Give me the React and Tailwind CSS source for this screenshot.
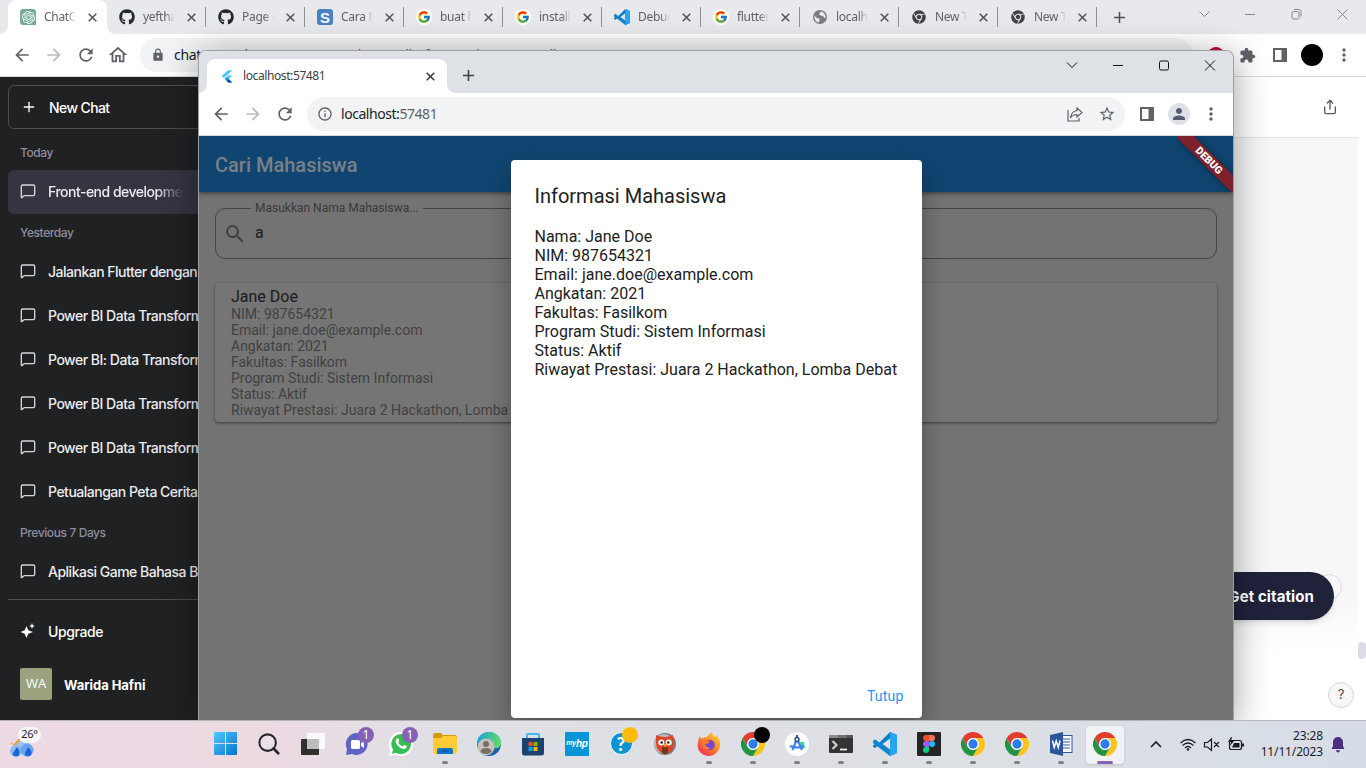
import React from "react";
import { FcGoogle } from "react-icons/fc";
import { FaGithub, FaChrome } from "react-icons/fa";
import { SiOpenai } from "react-icons/si";
import {
  MdArrowBack, MdArrowForward, MdRefresh, MdOutlineHome, MdLock, MdExtension, MdMoreVert,
  MdStarBorder, MdPerson, MdSearch, MdInfoOutline, MdAdd,
} from "react-icons/md";
import { MessageSquare, Plus, Share } from "lucide-react";

const S = "font-['Noto_Sans','Open_Sans',sans-serif]";

function VsCode({ size }) {
  return (
    <svg width={size} height={size} viewBox="0 0 24 24">
      <path d="M17 0 24 3v18l-7 3L6 13 2.200 16 0 15v-2l3-1-3-1V9l2.200-1L6 11Z" fill="#0a7fc8" />
      <path d="M17 6.500 9.500 12l7.500 5.500Z" fill="#e2e4ea" />
      <path d="m17 0 7 3v18l-7 3Z" fill="#27a5f0" />
      <path d="M0 9 2.200 7.500 17 18v6L0 11Z" fill="#1186cf" />
    </svg>
  );
}

function Chrome({ size = 24 }) {
  return (
    <svg width={size} height={size} viewBox="0 0 48 48">
      <circle cx="24" cy="24" r="24" fill="#fff" />
      <path d="M3.200 12A24 24 0 0 1 44.800 12H24A12 12 0 0 0 13.600 30Z" fill="#e33b2e" />
      <path d="M44.800 12A24 24 0 0 1 24 48L34.400 30A12 12 0 0 0 24 12Z" fill="#fcc31e" />
      <path d="M24 48A24 24 0 0 1 3.200 12L13.600 30A12 12 0 0 0 34.400 30Z" fill="#229342" />
      <circle cx="24" cy="24" r="11.500" fill="#fff" />
      <circle cx="24" cy="24" r="9.300" fill="#2b7de9" />
    </svg>
  );
}

function Flutter() {
  return (
    <svg width="16" height="14" viewBox="0 0 24 24">
      <path d="M14 2 3 12l3.500 3.500L21 2Z" fill="#42c7f8" />
      <path d="M14 11 8 17l6 6h7l-6-6 6-6Z" fill="#42c7f8" />
      <path d="m11.500 20.500 3.500-3.500 6 6h-7Z" fill="#0a3f97" />
      <path d="m8 17 3.500-3.500L15 17l-3.500 3.500Z" fill="#2196f3" />
    </svg>
  );
}

function Close({ className }) {
  return (
    <svg width="13" height="13" viewBox="0 0 13 13" fill="none" stroke="currentColor" strokeWidth="1.600" className={className}>
      <path d="m2.700 2.700 7.600 7.600m0-7.600-7.600 7.600" />
    </svg>
  );
}

function SidePanel() {
  return (
    <svg width="14" height="14" viewBox="0 0 14 14">
      <path fillRule="evenodd" d="M0 0h14v14H0ZM2 2v10h6.500V2Z" fill="#5f6368" />
    </svg>
  );
}

function Favicon({ kind }) {
  if (kind === "gpt")
    return (
      <span className="flex size-4 items-center justify-center rounded-[3px] rounded-br-none bg-[#74aa9c]">
        <SiOpenai size={13} color="#fff" />
      </span>
    );
  if (kind === "github") return <FaGithub size={16} color="#24292f" />;
  if (kind === "s")
    return (
      <span className="flex size-4 items-center justify-center rounded-[3px] bg-[#4a7fc1] font-['Liberation_Sans',sans-serif] text-[15px] leading-none font-bold text-white">
        S
      </span>
    );
  if (kind === "google")
    return (
      <span className="flex size-4 items-center justify-center rounded-full bg-white">
        <FcGoogle size={14} />
      </span>
    );
  if (kind === "code") return <VsCode size={16} />;
  if (kind === "globe")
    return (
      <svg width="14" height="14" viewBox="0 0 14 14">
        <circle cx="7" cy="7" r="7" fill="#7b7d80" />
        <path d="M1.500 5.500 4 8l2.500.5V11L5.500 12.500C3 12 1 9.500 1.500 5.500ZM8 1.500 6 4l1.500 1.500L10 6l1 1.500 1.500 1C13 5 11 2 8 1.500Z" fill="#e8e9ed" />
      </svg>
    );
  return <FaChrome size={14} color="#3f4246" />;
}

const tabs = [
  ["gpt", "ChatGPT"], ["github", "yefthaa"], ["github", "Page not"], ["s", "Cara Me"], ["google", "buat ha"],
  ["google", "install fl"], ["code", "Debugg"], ["google", "flutter r"], ["globe", "localho"], ["chrome", "New Tab"], ["chrome", "New Tab"],
];

function BackTabs() {
  return (
    <div className="flex h-[34px] shrink-0 bg-[#e8e9ed] pl-2">
      {tabs.map(([kind, label], i) => (
        <div
          key={i}
          className={
            "relative flex h-[34px] w-[99px] shrink-0 items-center pl-3 " +
            (i === 0 ? "rounded-t-lg bg-white" : "")
          }
        >
          {i === 0 && (
            <>
              <span className="absolute bottom-0 -left-2 size-2 bg-[radial-gradient(circle_at_0_0,#e8e9ed_7.5px,#ffffff_8px)]" />
              <span className="absolute -right-2 bottom-0 size-2 bg-[radial-gradient(circle_at_100%_0,#e8e9ed_7.5px,#ffffff_8px)]" />
            </>
          )}
          <div className="flex w-4 justify-center"><Favicon kind={kind} /></div>
          <div className={"ml-2 w-8 overflow-hidden text-[12px] tracking-[-0.3px] whitespace-nowrap text-[#5f6368] mask-r-from-70% " + S}>
            {label}
          </div>
          <Close className="ml-[10px] shrink-0 text-[#54575b]" />
          {i > 0 && <div className="ml-[7px] h-5 w-px bg-[#8f9196]" />}
        </div>
      ))}
      <div className="flex w-[44px] items-center pl-[13px]"><MdAdd size={19} color="#4c4f53" /></div>
      <svg className="ml-auto" width="180" height="30" viewBox="0 0 180 30" fill="none" stroke="#85888c">
        <path d="m13.500 11.500 5 5 5-5M59 14.500h10M151.500 9.500l10 10m0-10-10 10" />
        <rect x="106" y="11.500" width="7" height="7.500" rx="1.500" />
        <path d="M108 9.500h5q2 0 2 2v5" />
      </svg>
    </div>
  );
}

function BackToolbar() {
  return (
    <div className="flex h-[43px] shrink-0 items-center border-b border-[#d5d7da] bg-white pl-3">
      <MdArrowBack size={20} color="#5f6368" />
      <MdArrowForward size={20} color="#b9bbbe" className="ml-3" />
      <MdRefresh size={20} color="#5f6368" className="ml-3" />
      <MdOutlineHome size={22} color="#5f6368" className="ml-[11px]" />
      <div className="ml-[11px] flex h-[34px] w-[1053px] items-center rounded-full bg-[#f1f3f4] pl-[11px]">
        <MdLock size={14} color="#5f6368" />
        <span className={"-mt-0.5 ml-[9px] text-[14px] tracking-[-0.3px] text-[#202124] " + S}>chat.openai.com</span>
        <span className={"-mt-0.5 text-[14px] tracking-[-0.3px] text-[#5f6368] " + S}>/c/3ea200a-d-4880-db4f-8201-8bc5a20287db</span>
      </div>
      <div className="ml-[15px] size-[16px] rounded-full bg-[#c3003c]" />
      <MdExtension size={17} color="#5f6368" className="ml-[15px]" />
      <div className="ml-[17px]"><SidePanel /></div>
      <div className="ml-[14px] size-[22px] rounded-full bg-black" />
      <MdMoreVert size={20} color="#5f6368" className="ml-[11px]" />
    </div>
  );
}

function Chat({ text, active }) {
  return (
    <div
      className={
        "flex h-11 items-center gap-3 rounded-md pl-3 text-[14px] tracking-[-0.5px] whitespace-nowrap text-[#ececf1] " +
        (active ? "bg-[#343541]" : "")
      }
    >
      <MessageSquare size={16} strokeWidth={2} className="shrink-0 -translate-y-px text-[#d5d5da]" />
      <span className={"-mt-px " + (active ? "w-[135px] overflow-hidden mask-r-from-80%" : "")}>{text}</span>
    </div>
  );
}

function Heading({ children }) {
  return <div className="flex h-9 items-center pt-0.5 pl-3 text-[12px] tracking-[-0.4px] text-[#8e8ea0]">{children}</div>;
}

function Sidebar() {
  return (
    <div className="flex w-[260px] shrink-0 flex-col overflow-hidden bg-[#202123] px-2 pt-2 font-['Inter',sans-serif] font-medium">
      <div className="flex h-11 shrink-0 items-center rounded-md border border-[#4d4d4f] pl-3 text-[14px] tracking-[-0.6px] text-white">
        <Plus size={16} className="mr-3" />
        <span className="mt-px">New Chat</span>
      </div>
      <div className="mt-[5px]"><Heading>Today</Heading></div>
      <Chat active text="Front-end development" />
      <Heading>Yesterday</Heading>
      <Chat text="Jalankan Flutter dengan Chrome" />
      <Chat text="Power BI Data Transformation" />
      <Chat text="Power BI: Data Transformation" />
      <Chat text="Power BI Data Transformation" />
      <Chat text="Power BI Data Transformation" />
      <Chat text="Petualangan Peta Cerita" />
      <Heading>Previous 7 Days</Heading>
      <Chat text="Aplikasi Game Bahasa Bali" />
      <div className="mt-[5px] flex h-[63px] shrink-0 items-center border-t border-[#4d4d4f] pl-3 text-[14px] tracking-[-0.4px] text-white">
        <svg width="16" height="16" viewBox="0 0 16 16" fill="#fff" className="mr-3">
          <path d="M6.500 3 8.300 7.200l4.700 1.800-4.700 1.800L6.500 15 4.700 10.800.500 9 4.700 7.200ZM12 0l.8 2.200L15 3l-2.200.8L12 6l-.8-2.200L9 3l2.200-.8Z" />
        </svg>
        Upgrade
      </div>
      <div className="mt-0.5 flex h-10 items-center pl-3 text-[13px] font-bold tracking-[-0.05px] text-white">
        <div className="mr-3 flex size-8 items-center justify-center rounded-[2px] bg-[#9ba37e] font-['Open_Sans',sans-serif] text-[13px] font-normal">
          WA
        </div>
        <span className="mt-[3px]">Warida Hafni</span>
      </div>
    </div>
  );
}

function BackWindow() {
  return (
    <div className="flex h-[720px] flex-col bg-white">
      <BackTabs />
      <BackToolbar />
      <div className="flex min-h-0 flex-1">
        <Sidebar />
        <div className="relative flex flex-1 flex-col">
          <div className="flex h-[60px] items-center justify-end pr-7">
            <Share size={16} color="#565869" />
          </div>
          <div className="mr-2 flex-1 border-t border-[#e3e4e6] bg-[linear-gradient(#f7f7f8_460px,#ffffff_515px)]" />
          <div className="absolute top-[565px] right-0 h-[17px] w-2 rounded-full bg-[#dcdce6]" />
          <div className="absolute top-[497px] right-6 size-[26px] rounded-full border border-[#d9d9e3] bg-[#f8f8f9]" />
          <div className="absolute top-[495px] right-8 flex h-12 w-[160px] items-center justify-end rounded-full bg-[#20223c] pt-0.5 pr-5 font-['Inter',sans-serif] text-[15px] font-bold tracking-[0.1px] text-white shadow-md">
            Get citation
          </div>
          <div className="absolute top-[605px] right-3 flex size-[26px] items-center justify-center rounded-full border border-[#d6d6e2] bg-[#f7f7f8] font-['Inter',sans-serif] text-[13px] text-[#444]">
            ?
          </div>
        </div>
      </div>
    </div>
  );
}

const cardRows = [
  "NIM: 987654321", "Email: jane.doe@example.com", "Angkatan: 2021", "Fakultas: Fasilkom",
  "Program Studi: Sistem Informasi", "Status: Aktif", "Riwayat Prestasi: Juara 2 Hackathon, Lomba Debat",
];

function FlutterPage() {
  return (
    <div className="relative flex min-h-0 flex-1 flex-col overflow-hidden bg-[#737373] font-['Roboto',sans-serif]">
      <div className="relative flex h-14 shrink-0 items-center bg-[#104571] px-4 pt-0.5 text-[20px] font-medium text-[#7a8086] shadow-[0_2px_4px_rgba(0,0,0,0.4)]">
        Cari Mahasiswa
      </div>
      <div className="flex flex-col px-4 pt-4">
        <div className="relative flex h-[51px] items-center rounded-[10px] border border-[#454545] pl-[7px] text-[16px] text-[#1b1b1b]">
          <MdSearch size={24} color="#3f3f3f" />
          <span className="-mt-0.5 ml-2">a</span>
          <span className="absolute -top-[9px] left-[35px] bg-[#737373] px-1 text-[12px] leading-4 text-[#3a3a3a]">
            Masukkan Nama Mahasiswa...
          </span>
        </div>
        <div className="mt-6 flex h-[139px] flex-col rounded bg-[#757575] px-4 pt-1 text-[14px] leading-4 text-[#414141] shadow-[0_1px_3px_rgba(0,0,0,0.5)]">
          <div className="text-[16px] leading-[19px] text-[#1a1a1a]">Jane Doe</div>
          {cardRows.map((r) => <div key={r}>{r}</div>)}
        </div>
      </div>
      <div className="absolute top-0 right-0 h-14 w-14 overflow-hidden">
        <div className="absolute top-[18px] -right-[26px] flex h-[13px] w-[100px] rotate-45 items-center justify-center bg-[#7d212d] text-[10.5px] font-black text-white shadow-[0_0_6px_rgba(0,0,0,0.5)]">
          DEBUG
        </div>
      </div>
      <div className="absolute top-6 left-[311.5px] flex h-[558px] w-[411px] flex-col rounded bg-white px-6 pt-6 text-[#212121] shadow-[0_10px_24px_rgba(0,0,0,0.3)]">
        <div className="text-[20px] leading-6">Informasi Mahasiswa</div>
        <div className="mt-[19px] text-[16px] leading-[19px] whitespace-nowrap">
          <div>Nama: Jane Doe</div>
          {cardRows.map((r) => <div key={r}>{r}</div>)}
        </div>
        <div className="mt-auto -mr-[6px] pb-[11px] text-right text-[14px] tracking-[0.2px] text-[#2196f3]">Tutup</div>
      </div>
    </div>
  );
}

function FrontWindow() {
  return (
    <div className="absolute top-[50px] left-[198px] flex h-[670px] w-[1036px] flex-col overflow-hidden rounded-t-lg border border-b-0 border-[#9d9fa1] bg-white shadow-[0_6px_36px_rgba(0,0,0,0.38)]">
      <div className="flex h-[42px] shrink-0 bg-[#dee1e6] pt-2 pl-2">
        <div className={"relative flex w-[240px] items-center rounded-t-lg bg-white pl-3 text-[12px] text-[#3c4043] " + S}>
          <span className="absolute bottom-0 -left-2 size-2 bg-[radial-gradient(circle_at_0_0,#dee1e6_7.5px,#ffffff_8px)]" />
          <span className="absolute -right-2 bottom-0 size-2 bg-[radial-gradient(circle_at_100%_0,#dee1e6_7.5px,#ffffff_8px)]" />
          <Flutter />
          <span className="ml-2 tracking-[-0.4px]">localhost:57481</span>
          <Close className="mr-[10px] ml-auto text-[#3c4043]" />
        </div>
        <MdAdd size={19} color="#3c4043" className="mt-[7px] ml-3" />
        <svg className="-mt-2 ml-auto" width="180" height="30" viewBox="0 0 180 30" fill="none" stroke="#111">
          <path d="m14 11.500 5 5 5-5M60 14.500h10M152 9.500l10 10m0-10-10 10" />
          <rect x="106.500" y="10" width="9" height="9" rx="1.500" />
        </svg>
      </div>
      <div className="flex h-[43px] shrink-0 items-center border-b border-[#dadce0] pl-3">
        <MdArrowBack size={20} color="#5f6368" />
        <MdArrowForward size={20} color="#b9bbbe" className="ml-3" />
        <MdRefresh size={20} color="#5f6368" className="ml-3" />
        <div className="ml-3 flex h-[34px] w-[818px] items-center rounded-full bg-[#f1f3f4] pr-[9px] pl-[10px]">
          <MdInfoOutline size={16} color="#5f6368" />
          <span className={"-mt-0.5 ml-2 text-[14px] tracking-[-0.45px] text-[#5f6368] " + S}>
            <span className="text-[#202124]">localhost:</span>57481
          </span>
          <svg className="ml-auto" width="16" height="15" viewBox="0 0 16 15" fill="none" stroke="#5f6368" strokeWidth="1.200">
            <path d="M1 3v11h11v-3M10 1l5 4.500L10 10V7.500C7 7.500 5 8.500 3.500 11 4 7 6 4 10 3.500Z" />
          </svg>
          <MdStarBorder size={18} color="#5f6368" className="ml-[15px]" />
        </div>
        <div className="ml-[15px]"><SidePanel /></div>
        <div className="ml-[14px] flex size-[22px] items-center justify-center rounded-full bg-[#dee1e6]">
          <MdPerson size={18} color="#535c72" />
        </div>
        <MdMoreVert size={20} color="#5f6368" className="ml-[11px]" />
      </div>
      <FlutterPage />
    </div>
  );
}

function Badge({ children, color }) {
  return (
    <span className={"absolute -top-[5px] -right-[5px] flex size-4 items-center justify-center rounded-full text-[12px] text-white " + S + " " + color}>
      {children}
    </span>
  );
}

const apps = [
  [<svg width="23" height="23" viewBox="0 0 23 23">
    <linearGradient id="win" x1="0" y1="0" x2="1" y2="1" gradientUnits="objectBoundingBox"><stop stopColor="#4fc9fb" /><stop offset="1" stopColor="#0873cf" /></linearGradient>
    <path d="M0 1q0-1 1-1h10v11H0ZM12 0h10q1 0 1 1v10H12ZM0 12h11v11H1q-1 0-1-1ZM12 12h11v10q0 1-1 1H12Z" fill="url(#win)" />
  </svg>],
  [<svg width="22" height="22" viewBox="0 0 24 24" fill="none" stroke="#26272a"><circle cx="10.500" cy="10.500" r="9" strokeWidth="2.200" fill="#e9e1e8" /><path d="m17 17 5 5" strokeWidth="3" strokeLinecap="round" /></svg>],
  [<svg width="24" height="24" viewBox="0 0 24 24"><rect x="0" y="7" width="18" height="16" rx="1" fill="#30302e" /><rect x="6" y="1" width="18" height="16" rx="1" fill="#fafafa" /><path d="M6 7h12v10H6Z" fill="#bdbdbd" /></svg>],
  [<svg width="24" height="24" viewBox="0 0 24 24"><path d="M12 1a11 11 0 1 1-5 21L1 23l1-6A11 11 0 0 1 12 1Z" fill="#6062c8" /><rect x="6" y="8" width="9" height="9" rx="1.500" fill="#fff" /><path d="m16 11 3-2v7l-3-2Z" fill="#fff" /></svg>, , <Badge color="bg-[#8761b4]">1</Badge>],
  [<svg width="24" height="24" viewBox="0 0 24 24"><path d="M12 0a12 12 0 1 1-5.500 22.600L0 24l1.500-6A12 12 0 0 1 12 0Z" fill="#fff" /><path d="M12 2a10 10 0 1 1-5 18.700L3 22l1-4.500A10 10 0 0 1 12 2Z" fill="#35bf52" /><path d="M8 6.500c1-.5 1.500 0 2 1.500.7 1.500-1 1.800-.5 2.800 1 1.800 2 2.700 3.800 3.500 1 .3 1.300-1.500 2.300-1.200 2 .8 2.700 1 2 2.500-2.500 4-11-1.500-11-6.500 0-1.200.6-2.200 1.400-2.600Z" fill="#fff" /></svg>, , <Badge color="bg-[#8761b4]">1</Badge>],
  [<svg width="24" height="24" viewBox="0 0 24 24"><path d="M0 3q0-2 2-2h6l2 2h12q2 0 2 2v15H0Z" fill="#d99a0a" /><path d="M0 6h8l2-2h12q2 0 2 2v14q0 2-2 2H2q-2 0-2-2Z" fill="#ffcc38" /><path d="M4 22v-4q0-2 2-2h12q2 0 2 2v4Z" fill="#1273c9" /><path d="M8 19h8" stroke="#0c4f92" /></svg>, "run"],
  [<svg width="24" height="24" viewBox="0 0 24 24"><linearGradient id="edge"><stop stopColor="#16a2d8" /><stop offset="1" stopColor="#61dd68" /></linearGradient><circle cx="12" cy="12" r="12" fill="#1c62ad" /><path d="M0 12A12 12 0 0 1 24 12q-1 5-7 4L9 12Z" fill="url(#edge)" /><circle cx="9" cy="15" r="8.500" fill="#c7c1bb" /><circle cx="9" cy="12" r="3" fill="#756d68" /><path d="M3.500 20q0-4 5.500-4t5.500 4Q9 24 3.500 20Z" fill="#756d68" /></svg>],
  [<svg width="24" height="24" viewBox="0 0 24 24"><path d="M6 7V3q0-1 1-1h10q1 0 1 1v4" fill="none" stroke="#3fb8ef" strokeWidth="2" /><path d="M1 6h22v15q0 2.500-2.500 2.500h-17Q1 23.500 1 21Z" fill="#1d4270" /><path d="M7.500 10h4v4h-4Z" fill="#f25022" /><path d="M12.500 10h4v4h-4Z" fill="#7fba00" /><path d="M7.500 15h4v4h-4Z" fill="#00a4ef" /><path d="M12.500 15h4v4h-4Z" fill="#ffb900" /></svg>],
  [<span className="flex size-6 items-center justify-center bg-[#0696d7] font-['Liberation_Sans',sans-serif] text-[8.5px] font-bold tracking-tight text-white italic"><span className="text-[7px]">my</span><span className="text-[10px]">hp</span></span>],
  [<span className="flex size-[23px] items-center justify-center rounded-full border-[1.5px] border-white bg-[#0b93d2] font-['Lato',sans-serif] text-[19px] leading-none font-black text-white">?</span>, , <Badge color="bg-[#ffbc0e]" />],
  [<svg width="24" height="24" viewBox="0 0 24 24"><circle cx="12" cy="12" r="11" fill="#77777f" /><circle cx="11" cy="12" r="10" fill="#b9b9c2" /><path d="M3 3q9 4 17 0l1 9q0 8-9 10Q3 20 3 11Z" fill="#dc4526" /><path d="M9 15h6v6q-3 2-6 0Z" fill="#70351f" /><circle cx="8.300" cy="10.500" r="3" fill="#fff" /><circle cx="15.700" cy="10.500" r="3" fill="#fff" /><circle cx="8.700" cy="10.500" r="1.300" fill="#222" /><circle cx="15.300" cy="10.500" r="1.300" fill="#222" /><path d="m10.500 12 1.500 4 1.500-4Z" fill="#f6a72b" /></svg>],
  [<svg width="24" height="24" viewBox="0 0 24 24"><linearGradient id="fox" x1="1" y1="0" x2=".2" y2="1"><stop stopColor="#ffdf3a" /><stop offset=".5" stopColor="#ff8a23" /><stop offset="1" stopColor="#f42a5c" /></linearGradient><path d="M3 4q0 2 2 2.500Q7 5 10 5q1-3 5-5 0 3 3 5 1-1 1-2 5 5 4 11a11.300 11.300 0 0 1-22.500-.5Q.5 8 3 4Z" fill="url(#fox)" /><circle cx="12.500" cy="13" r="5.300" fill="#7646d0" /><path d="M5 8q4-2 8 2-2 2-5 2 1 4 6 4Q8 20 6 14Z" fill="#ff7a2b" /></svg>, "run"],
  [<Chrome />, "run", <Badge color="bg-black" />],
  [<svg width="24" height="24" viewBox="0 0 24 24"><circle cx="12" cy="12" r="12" fill="#fff" /><path d="M14 10h5l1 6-4 1Z" fill="#3ddc84" /><path d="m11.500 8-4 10M12.500 8l4.500 10M5 14q7 3 14 0" fill="none" stroke="#3e7ff5" strokeWidth="2.200" /><circle cx="12" cy="7.500" r="2" fill="#fff" stroke="#244a7f" strokeWidth="1.400" /><path d="M12 3v3" stroke="#244a7f" strokeWidth="1.800" /></svg>, "run"],
  [<svg width="24" height="24" viewBox="0 0 24 24"><rect y="3" width="24" height="18" rx="1" fill="#333" /><path d="M0 3h9v3H0Z" fill="#8b8b8b" /><path d="M9 3h9v3H9Z" fill="#717171" /><path d="M18 3h6v3h-6Z" fill="#555" /><path d="m3.500 9 4 4-4 4" fill="none" stroke="#ccc" strokeWidth="2.200" /><path d="M11 17.500h7" stroke="#eee" strokeWidth="1.800" /></svg>, "run"],
  [<VsCode size={24} />, "run"],
  [<svg width="24" height="24" viewBox="0 0 24 24"><rect width="24" height="24" rx="1" fill="#252525" /><path d="M12 3H9a3 3 0 0 0 0 6h3Z" fill="#f24e1e" /><path d="M12 3h3a3 3 0 0 1 0 6h-3Z" fill="#ff7262" /><path d="M12 9H9a3 3 0 0 0 0 6h3Z" fill="#a259ff" /><circle cx="15" cy="12" r="3" fill="#1abcfe" /><path d="M12 15H9a3 3 0 1 0 3 3Z" fill="#0acf83" /></svg>, "run"],
  [<Chrome />, "run"],
  [<Chrome />, "run"],
  [<svg width="24" height="24" viewBox="0 0 24 24"><rect x="12" y="3.500" width="11" height="17" fill="#fff" stroke="#2b579a" /><path d="M14 7h7M14 10h7M14 13h7M14 16h7" stroke="#2b579a" strokeWidth="1.200" /><path d="m1 3 13-3v24L1 21Z" fill="#2b579a" /><path d="m3.500 8.500 1.700 7 2-6.500 2 6.500 1.800-7" fill="none" stroke="#fff" strokeWidth="1.500" /></svg>, "run"],
  [<Chrome />, "active"],
];

function Taskbar() {
  return (
    <div className="flex h-12 items-center border-t border-[#b5b3b8] bg-[linear-gradient(90deg,#ecd9e4_0px,#ecdae3_270px,#dfe0e5_440px,#dcdfe4_1000px,#d6dde7_1366px)]">
      <div className="relative ml-[9px] h-8 w-[34px]">
        <svg className="mt-1" width="26" height="28" viewBox="0 0 26 28">
          <path d="M0 9 5 11l6-7 3 6-5 5Z" fill="#f29a2e" />
          <circle cx="14" cy="14" r="7" fill="#9dc4f5" /><circle cx="7" cy="18" r="6" fill="#8ab9f1" /><circle cx="18" cy="17" r="6.500" fill="#6ba5ec" />
          <path d="M8 14q5 6 1 9-6 1-5-3Zm11 0q6 5 2 9-6 1-5-3Z" fill="#1668dc" />
        </svg>
        <span className={"absolute -top-0.5 left-[9px] flex h-4 w-[23px] items-center justify-center rounded-full bg-[#f8f5f7] text-[11px] tracking-tight text-[#222] " + S}>26°</span>
      </div>
      <div className="ml-[160px] flex">
        {apps.map(([icon, state, badge], i) => (
          <div key={i} className="flex h-[46px] w-11 justify-center">
            <div
              className={
                "flex w-[38px] flex-col items-center " +
                (state === "active" ? "mt-1 h-[38px] rounded bg-[#f0f2f5] pt-[6px] shadow-sm" : "h-[46px] pt-[10px]")
              }
            >
              <div className="relative flex size-6 items-center justify-center">{icon}{badge}</div>
              {state === "run" && <div className="mt-[5px] h-[3px] w-[6px] rounded-full bg-[#7f8185]" />}
              {state === "active" && <div className="mt-[5px] h-[3px] w-4 shrink-0 rounded-full bg-[#8761b4]" />}
            </div>
          </div>
        ))}
      </div>
      <svg className="ml-auto" width="100" height="24" viewBox="0 0 100 24" fill="none" stroke="#1c1c1e" strokeWidth="1.200">
        <path d="m7 14 5-5 5 5" strokeWidth="1.600" />
        <path d="M36.500 10q7.500-7 15 0M38.500 12.500q5.500-5 11 0M41 15q3-3 6 0" /><circle cx="44" cy="16.500" r="1.200" fill="#1c1c1e" stroke="none" />
        <path d="M60.500 9.500h3l4-3.500v11.500l-4-3.500h-3ZM70 9l5 5m0-5-5 5" />
        <rect x="85.500" y="7.500" width="12" height="9" rx="2" /><path d="M99 10.500v3" strokeWidth="2" /><path d="M90 10h5.500v4.500H88Z" fill="#1c1c1e" stroke="none" /><path d="m87 4-3 5h3l-1 4 4-5h-3l1-4Z" fill="#1c1c1e" stroke="none" />
      </svg>
      <div className={"ml-[13px] w-[66px] text-right text-[12px] leading-4 tracking-[-0.15px] whitespace-nowrap text-[#1c1c1e] " + S}>
        <div className="-mt-px">23:28</div>
        <div>11/11/2023</div>
      </div>
      <svg className="mr-[21px] ml-2" width="14" height="16" viewBox="0 0 14 16" fill="#4b2e83">
        <path d="M7 0a5 5 0 0 1 5 5v4l1.500 3h-13L2 9V5A5 5 0 0 1 7 0ZM4.800 13.200h4.400Q8.500 15.500 7 15.500t-2.200-2.300Z" />
      </svg>
    </div>
  );
}

export default function App() {
  return (
    <div className="relative flex h-[768px] w-[1366px] flex-col overflow-hidden">
      <div className="relative h-[720px] overflow-hidden">
        <BackWindow />
        <FrontWindow />
      </div>
      <Taskbar />
    </div>
  );
}
